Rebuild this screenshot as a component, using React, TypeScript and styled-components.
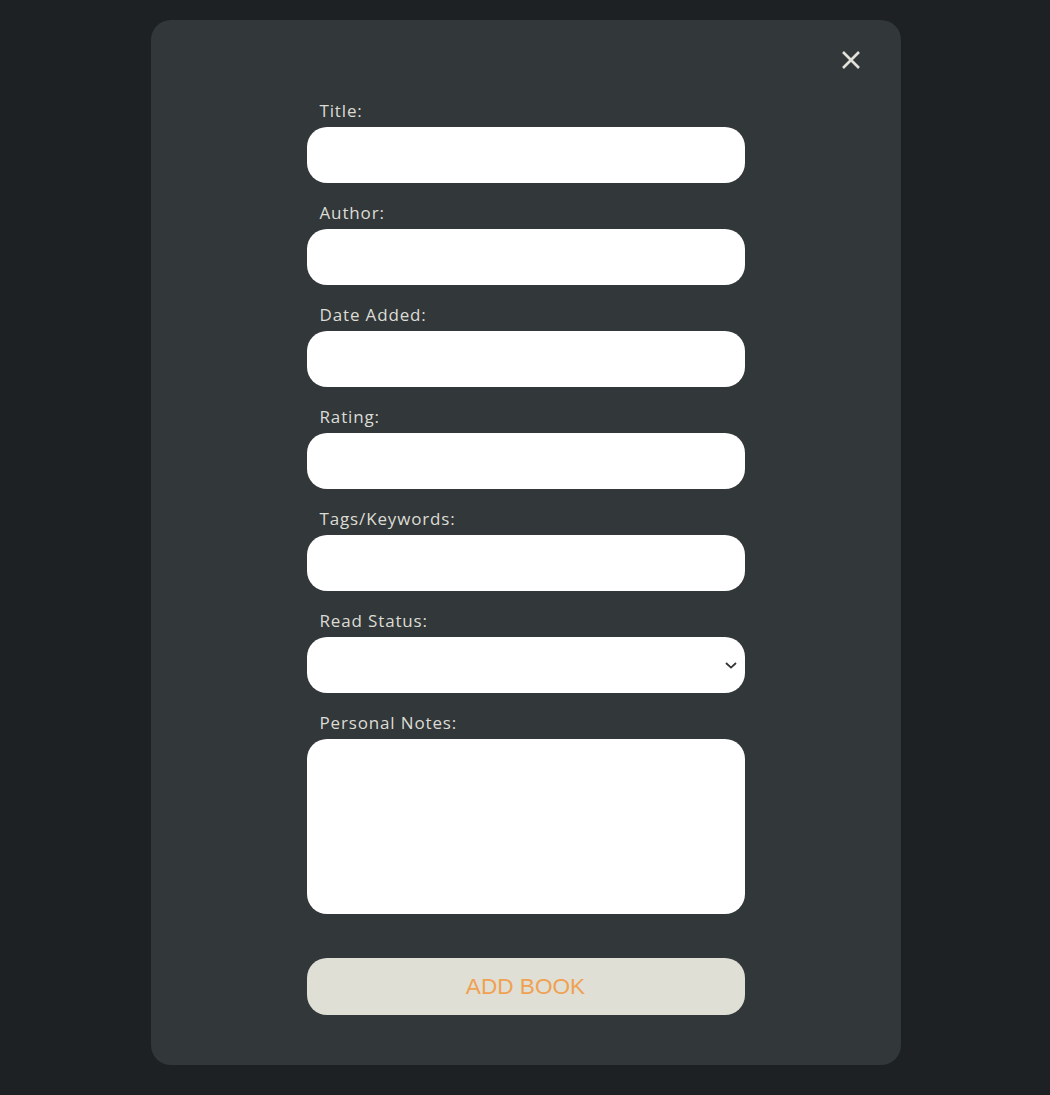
import React from "react";
import styled, { createGlobalStyle } from "styled-components";

const Global = createGlobalStyle`
  html, body { margin: 0; padding: 0; background: #1e2124; }
  body { font-family: "Open Sans", "Liberation Sans", sans-serif; }
  * { box-sizing: border-box; }
`;

const Page = styled.div`
  min-height: 1095px;
  padding: 20px 0 0 1px;
  display: flex;
  justify-content: center;
  align-items: flex-start;
`;

const Modal = styled.div`
  width: 750px;
  height: 1045px;
  background: #32373a;
  border-radius: 20px;
  padding: 30px 40px 50px;
  display: flex;
  flex-direction: column;
`;

const Header = styled.div`
  display: flex;
  justify-content: flex-end;
  height: 20px;
  margin-bottom: 30px;
`;

const CloseButton = styled.button`
  width: 20px;
  height: 20px;
  padding: 0;
  border: none;
  background: transparent;
  cursor: pointer;
  display: flex;
  align-items: center;
  justify-content: center;
`;

const Form = styled.form`
  width: 438px;
  align-self: center;
  display: flex;
  flex-direction: column;
`;

const Label = styled.label`
  display: block;
  height: 22px;
  line-height: 22px;
  padding-left: 13px;
  margin-bottom: 5px;
  font-size: 17px;
  color: #dcdcd4;
  letter-spacing: 0.85px;
`;

const Field = styled.div`
  display: flex;
  flex-direction: column;
  margin-bottom: 19px;
`;

const Input = styled.input`
  width: 100%;
  height: 56px;
  border: none;
  border-radius: 20px;
  background: #ffffff;
  padding: 0 16px;
  font-size: 16px;
  outline: none;
`;

const SelectWrap = styled.div`
  position: relative;
  width: 100%;
  height: 56px;
`;

const Select = styled.select`
  appearance: none;
  -webkit-appearance: none;
  width: 100%;
  height: 56px;
  border: none;
  border-radius: 20px;
  background: #ffffff;
  padding: 0 32px 0 16px;
  font-size: 16px;
  outline: none;
`;

const Chevron = styled.svg`
  position: absolute;
  right: 8px;
  top: 25px;
  pointer-events: none;
`;

const TextArea = styled.textarea`
  width: 100%;
  height: 175px;
  border: none;
  border-radius: 20px;
  background: #ffffff;
  padding: 12px 16px;
  font-size: 16px;
  resize: none;
  outline: none;
  display: block;
`;

const SubmitButton = styled.button`
  margin-top: 25px;
  width: 100%;
  height: 57px;
  border: none;
  border-radius: 20px;
  background: #dfdfd6;
  color: #f0a152;
  font-family: "Liberation Sans", Arial, sans-serif;
  font-size: 22.6px;
  cursor: pointer;
`;

const fields = ["Title:", "Author:", "Date Added:", "Rating:", "Tags/Keywords:"];

export default function App() {
  return (
    <>
      <Global />
      <Page>
        <Modal>
          <Header>
            <CloseButton aria-label="Close">
              <svg width="20" height="20" viewBox="0 0 20 20">
                <path d="M2 2 L18 18 M18 2 L2 18" stroke="#e2e2da" strokeWidth="2.6" strokeLinecap="butt" />
              </svg>
            </CloseButton>
          </Header>
          <Form onSubmit={(e) => e.preventDefault()}>
            {fields.map((f) => (
              <Field key={f}>
                <Label>{f}</Label>
                <Input type="text" />
              </Field>
            ))}
            <Field>
              <Label>Read Status:</Label>
              <SelectWrap>
                <Select defaultValue="">
                  <option value=""></option>
                  <option value="read">Read</option>
                  <option value="unread">Unread</option>
                </Select>
                <Chevron width="12" height="7" viewBox="0 0 12 7">
                  <path d="M1 1 L6 5.6 L11 1" fill="none" stroke="#333" strokeWidth="1.8" />
                </Chevron>
              </SelectWrap>
            </Field>
            <Field>
              <Label>Personal Notes:</Label>
              <TextArea />
            </Field>
            <SubmitButton type="submit">ADD BOOK</SubmitButton>
          </Form>
        </Modal>
      </Page>
    </>
  );
}
